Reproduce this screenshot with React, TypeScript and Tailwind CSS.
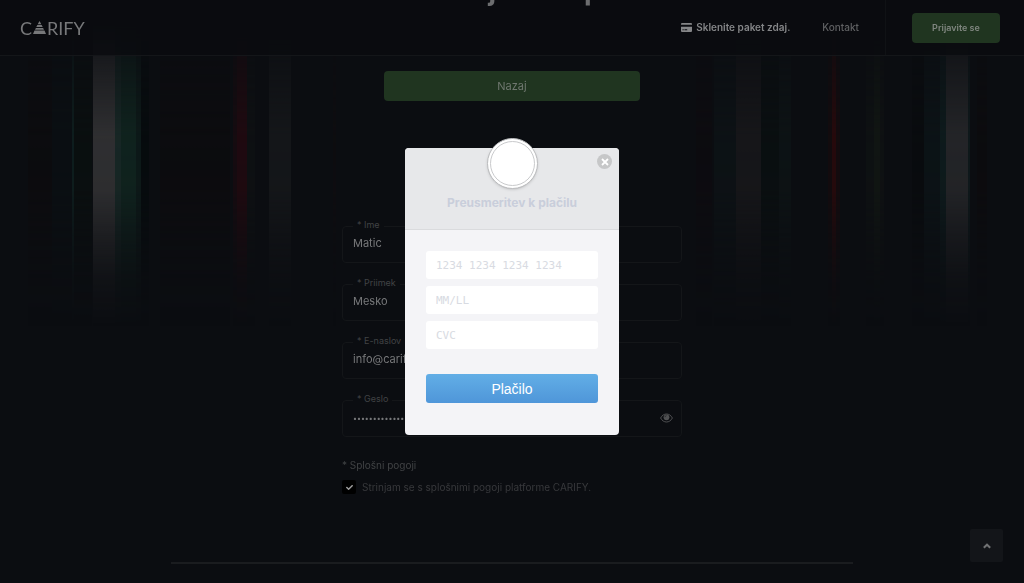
import { useState } from "react";
import { FaCheck } from "react-icons/fa";

type Field = {
  id: string;
  label: string;
  value: string;
  type: string;
};

const fields: Field[] = [
  { id: "first-name", label: "Ime", value: "Matic", type: "text" },
  { id: "last-name", label: "Priimek", value: "Mesko", type: "text" },
  { id: "email", label: "E-naslov", value: "info@carify.si", type: "email" },
  { id: "password", label: "Geslo", value: "carifygeslo12345", type: "password" },
];

const cardFields = [
  { id: "card-number", label: "Številka kartice", placeholder: "1234 1234 1234 1234" },
  { id: "card-expiry", label: "Veljavnost", placeholder: "MM/LL" },
  { id: "card-cvc", label: "CVC", placeholder: "CVC" },
];

// Vertical light streaks: [x, width, colour, opacity]
const streaks: [number, number, string, number][] = [
  [28, 24, "#0e0b0e", 0.6],
  [52, 20, "#0a1114", 0.6],
  [72, 2, "#12302c", 0.5],
  [74, 18, "#0a0f10", 0.9],
  [93, 22, "#313133", 1],
  [115, 6, "#182826", 1],
  [121, 15, "#10241f", 1],
  [136, 5, "#0d1a19", 1],
  [141, 8, "#060b0d", 0.9],
  [160, 70, "#0d0b0e", 0.6],
  [233, 4, "#190b10", 0.8],
  [237, 10, "#200a10", 1],
  [247, 8, "#0e1113", 0.9],
  [269, 22, "#15171a", 1],
  [333, 3, "#0f0d10", 0.7],
  [696, 16, "#0e0b0f", 0.7],
  [714, 22, "#0d1316", 0.9],
  [736, 25, "#17171a", 1],
  [761, 18, "#0a0f11", 0.9],
  [779, 12, "#0d1315", 1],
  [828, 4, "#150b0e", 0.8],
  [832, 4, "#280a0c", 1],
  [836, 4, "#160b0e", 0.8],
  [866, 8, "#0e1213", 0.9],
  [874, 6, "#111613", 1],
  [880, 4, "#0f1213", 0.9],
  [912, 12, "#090b0e", 0.8],
  [924, 16, "#0c1417", 0.9],
  [940, 6, "#0e1b1d", 1],
  [946, 22, "#252629", 1],
  [968, 2, "#0f1b1d", 0.9],
  [977, 10, "#0d0b0e", 0.8],
];

function Backdrop() {
  return (
    <svg
      aria-hidden="true"
      className="absolute inset-x-0 top-0 h-[340px] w-full"
      viewBox="0 0 1024 340"
      preserveAspectRatio="none"
    >
      <defs>
        <linearGradient id="fade" x1="0" y1="0" x2="0" y2="1">
          <stop offset="0.06" stopColor="#fff" stopOpacity="0" />
          <stop offset="0.18" stopColor="#fff" stopOpacity="0.4" />
          <stop offset="0.4" stopColor="#fff" stopOpacity="0.95" />
          <stop offset="0.56" stopColor="#fff" stopOpacity="0.9" />
          <stop offset="0.7" stopColor="#fff" stopOpacity="0.45" />
          <stop offset="0.82" stopColor="#fff" stopOpacity="0.15" />
          <stop offset="0.96" stopColor="#fff" stopOpacity="0" />
        </linearGradient>
        <mask id="streak-mask">
          <rect width="1024" height="340" fill="url(#fade)" />
        </mask>
      </defs>
      <g mask="url(#streak-mask)">
        {streaks.map(([x, width, fill, opacity]) => (
          <rect key={x} x={x} y="0" width={width} height="340" fill={fill} opacity={opacity} />
        ))}
      </g>
    </svg>
  );
}

function Logo() {
  return (
    <a href="#" aria-label="Carify" className="flex items-center gap-px font-['Lato',sans-serif] text-lg leading-5 text-[#77787a]">
      <span>C</span>
      <svg aria-hidden="true" viewBox="0 0 13 13" className="h-[13px] w-[13px]" fill="currentColor">
        <path d="M6.5 0 8.3 3.3H4.7zM4.3 4.1h4.4l1 2H3.3zM2.9 6.9h7.2l.9 1.9H2zM1.5 9.6h10L13 13H0z" />
      </svg>
      <span>RIFY</span>
    </a>
  );
}

function Header() {
  return (
    <header className="relative flex h-14 items-center border-b border-[#141619] bg-[#0a0b0f]/80 pr-6 pl-5">
      <Logo />
      <nav className="ml-auto flex items-center text-[10px] text-[#606163]">
        <a href="#" className="flex items-center gap-1 font-semibold text-[#858688]">
          <svg aria-hidden="true" viewBox="0 0 11 9" className="h-[9px] w-[11px]" fill="currentColor">
            <path d="M1 0h9a1 1 0 0 1 1 1v.7H0V1a1 1 0 0 1 1-1zM0 3.7h11V8a1 1 0 0 1-1 1H1a1 1 0 0 1-1-1zM1.5 6.3v1h1.2v-1zm2 0v1h2.7v-1z" fillRule="evenodd" />
          </svg>
          Sklenite paket zdaj.
        </a>
        <a href="#" className="ml-8 font-medium">
          Kontakt
        </a>
      </nav>
      <div className="ml-[26px] h-full w-px bg-[#101215]" />
      <button className="ml-[26px] h-[30px] w-[88px] rounded bg-[#203520] text-[9px] font-semibold text-[#7f867f]">
        Prijavite se
      </button>
    </header>
  );
}

function FormField({ id, label, value, type }: Field) {
  const isPassword = type === "password";

  return (
    <div className="relative h-[37px] rounded border border-[#141619]">
      <label htmlFor={id} className="absolute -top-2.5 left-2.5 bg-[#0b0d11] px-1 text-[9px] leading-4 text-[#414345]">
        * {label}
      </label>
      <input
        id={id}
        type={type}
        defaultValue={value}
        className={`h-full w-full bg-transparent px-2.5 text-[#77787a] outline-none ${isPassword ? "text-[7px]" : "pb-1 text-[11px]"}`}
      />
      {isPassword && (
        <button type="button" aria-label="Pokaži geslo" className="absolute top-3 right-2 text-[#505153]">
          <svg aria-hidden="true" viewBox="0 0 13 10" className="h-2.5 w-[13px]" fill="none" stroke="currentColor">
            <path d="M.6 5C2 2.4 4.1 1 6.5 1s4.5 1.4 5.9 4c-1.4 2.6-3.5 4-5.9 4S2 7.6.6 5z" />
            <circle cx="6.5" cy="4.3" r="2.9" fill="currentColor" stroke="none" />
            <path d="M5 4.2c0-.9.6-1.5 1.5-1.5" stroke="#0b0d11" strokeWidth=".6" />
          </svg>
        </button>
      )}
    </div>
  );
}

function PaymentModal({ onClose }: { onClose: () => void }) {
  return (
    <div className="fixed inset-0 flex items-center justify-center">
      <div role="dialog" aria-labelledby="payment-title" className="relative w-[214px] rounded bg-[#f4f4f7]">
        <div className="h-[82px] rounded-t border-b border-[#dadbdd] bg-[#e7e8ea] pt-[47px] text-center">
          <h2 id="payment-title" className="text-xs leading-4 font-bold text-[#c9cedb]">
            Preusmeritev k plačilu
          </h2>
        </div>
        <div className="absolute inset-x-0 -top-2.5 mx-auto h-[51px] w-[51px] rounded-full border border-[#bbbcbe] bg-white p-0.5 shadow-sm">
          <div className="h-full w-full rounded-full border border-[#c9cacc]" />
        </div>
        <button
          type="button"
          aria-label="Zapri"
          onClick={onClose}
          className="absolute top-1.5 right-[7px] flex h-[15px] w-[15px] items-center justify-center rounded-full bg-[#c6c7c8] text-white"
        >
          <svg aria-hidden="true" viewBox="0 0 8 8" className="h-2 w-2" stroke="currentColor" strokeWidth="1.8">
            <path d="M1 1l6 6M7 1L1 7" />
          </svg>
        </button>
        <form className="px-[21px] pt-[21px] pb-8" onSubmit={(e) => e.preventDefault()}>
          <div className="flex flex-col gap-[7px]">
            {cardFields.map((field) => (
              <input
                key={field.id}
                id={field.id}
                aria-label={field.label}
                placeholder={field.placeholder}
                className="h-7 w-full rounded-[3px] bg-white px-2.5 font-['DejaVu_Sans_Mono',monospace] text-[11px] text-[#333] outline-none placeholder:text-[#d8dbe2]"
              />
            ))}
          </div>
          <button
            type="submit"
            className="mt-[25px] h-[29px] w-full rounded-[3px] bg-linear-to-b from-[#62aee6] to-[#4f96d9] font-['Liberation_Sans',Arial,sans-serif] text-sm text-white"
          >
            Plačilo
          </button>
        </form>
      </div>
    </div>
  );
}

export default function App() {
  const [modalOpen, setModalOpen] = useState(true);

  return (
    <div className="relative min-h-screen overflow-hidden bg-[#0b0d11] font-['Inter',sans-serif]">
      <Backdrop />
      <Header />
      {/* Page title, scrolled almost out of view */}
      <h1 className="absolute inset-x-0 -top-[26px] flex justify-center gap-[88px] pl-[66px] text-[28px] leading-8 font-bold text-[#6c6d6f]">
        <span>j</span>
        <span>p</span>
      </h1>

      <main className="relative flex flex-col items-center pt-[15px]">
        <button type="button" className="h-[30px] w-1/4 rounded bg-[#203520] text-[11px] text-[#6f776f]">
          Nazaj
        </button>

        <form className="mt-[125px] w-[340px]">
          <div className="flex flex-col gap-[21px]">
            {fields.map((field) => (
              <FormField key={field.id} {...field} />
            ))}
          </div>
          <p className="mt-5 text-[10px] leading-4 text-[#414345]">* Splošni pogoji</p>
          <div className="mt-1.5 flex items-center gap-1.5 text-[10px] leading-4 text-[#38393c]">
            <span className="relative flex h-3.5 w-3.5">
              <input id="terms" type="checkbox" defaultChecked className="peer h-3.5 w-3.5 appearance-none rounded-xs bg-black" />
              <FaCheck className="pointer-events-none absolute inset-0 m-auto hidden h-[7px] w-[7px] text-[#a0a0a0] peer-checked:block" />
            </span>
            <label htmlFor="terms">Strinjam se s splošnimi pogoji platforme CARIFY.</label>
          </div>
        </form>

        <hr className="mt-[67px] w-2/3 border-t-2 border-[#1a1c1f]" />
      </main>

      <a
        href="#"
        aria-label="Na vrh"
        className="fixed right-[21px] bottom-[21px] flex h-[33px] w-[33px] items-center justify-center rounded-xs bg-[#131519] text-[#707173]"
      >
        <svg aria-hidden="true" viewBox="0 0 8 6" className="h-1.5 w-2" fill="none" stroke="currentColor" strokeWidth="2">
          <path d="M.8 4.8 4 1.7l3.2 3.1" />
        </svg>
      </a>

      {modalOpen && <PaymentModal onClose={() => setModalOpen(false)} />}
    </div>
  );
}
